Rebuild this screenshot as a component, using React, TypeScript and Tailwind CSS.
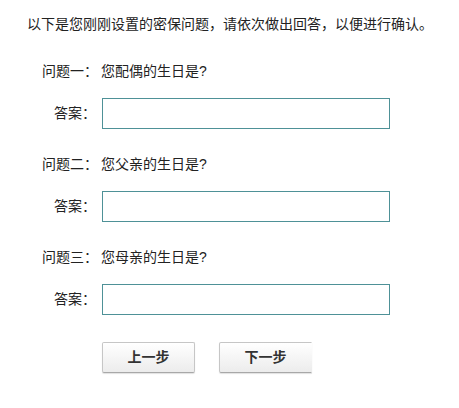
import { useState } from "react"

const questions = [
  { label: "问题一：", text: "您配偶的生日是?" },
  { label: "问题二：", text: "您父亲的生日是?" },
  { label: "问题三：", text: "您母亲的生日是?" },
]

export default function App() {
  const [answers, setAnswers] = useState(["", "", ""])

  const update = (i: number, v: string) => {
    setAnswers((prev) => prev.map((a, j) => (j === i ? v : a)))
  }

  return (
    <div
      className="w-[459px] h-[408px] bg-white text-[14px] text-[#222] pt-[14px]"
      style={{ fontFamily: '"Liberation Sans", "Noto Sans CJK SC", sans-serif' }}
    >
      <p className="pl-[27px] leading-[20px] h-[20px] whitespace-nowrap">
        以下是您刚刚设置的密保问题，请依次做出回答，以便进行确认。
      </p>

      <div className="flex flex-col gap-[25px] mt-[27px]">
        {questions.map((q, i) => (
          <div key={i} className="flex flex-col">
            <div className="flex pl-[42px] leading-[20px] h-[20px]">
              <span className="w-[59px]">{q.label}</span>
              <span>{q.text}</span>
            </div>
            <div className="flex items-center mt-[17px] pl-[42px]">
              <label className="w-[54px] text-right">答案：</label>
              <input
                type="text"
                value={answers[i]}
                onChange={(e) => update(i, e.target.value)}
                className="ml-[6px] w-[288px] h-[31px] border border-[#4e9197] outline-none px-2 text-[13px]"
              />
            </div>
          </div>
        ))}
      </div>

      <div className="flex gap-[24px] pl-[102px] mt-[27px]">
        <button className="w-[93px] h-[31px] border border-[#c6c6c6] border-b-[#a8a8a8] rounded-[2px] bg-gradient-to-b from-white to-[#ececec] text-[14px] font-bold text-[#333] shadow-[0_1px_1px_rgba(0,0,0,0.12)]">
          上一步
        </button>
        <button className="w-[93px] h-[31px] border border-[#c6c6c6] border-b-[#a8a8a8] border-r-transparent rounded-l-[2px] bg-gradient-to-b from-white to-[#ececec] text-[14px] font-bold text-[#333] shadow-[0_1px_1px_rgba(0,0,0,0.12)]">
          下一步
        </button>
      </div>
    </div>
  )
}
